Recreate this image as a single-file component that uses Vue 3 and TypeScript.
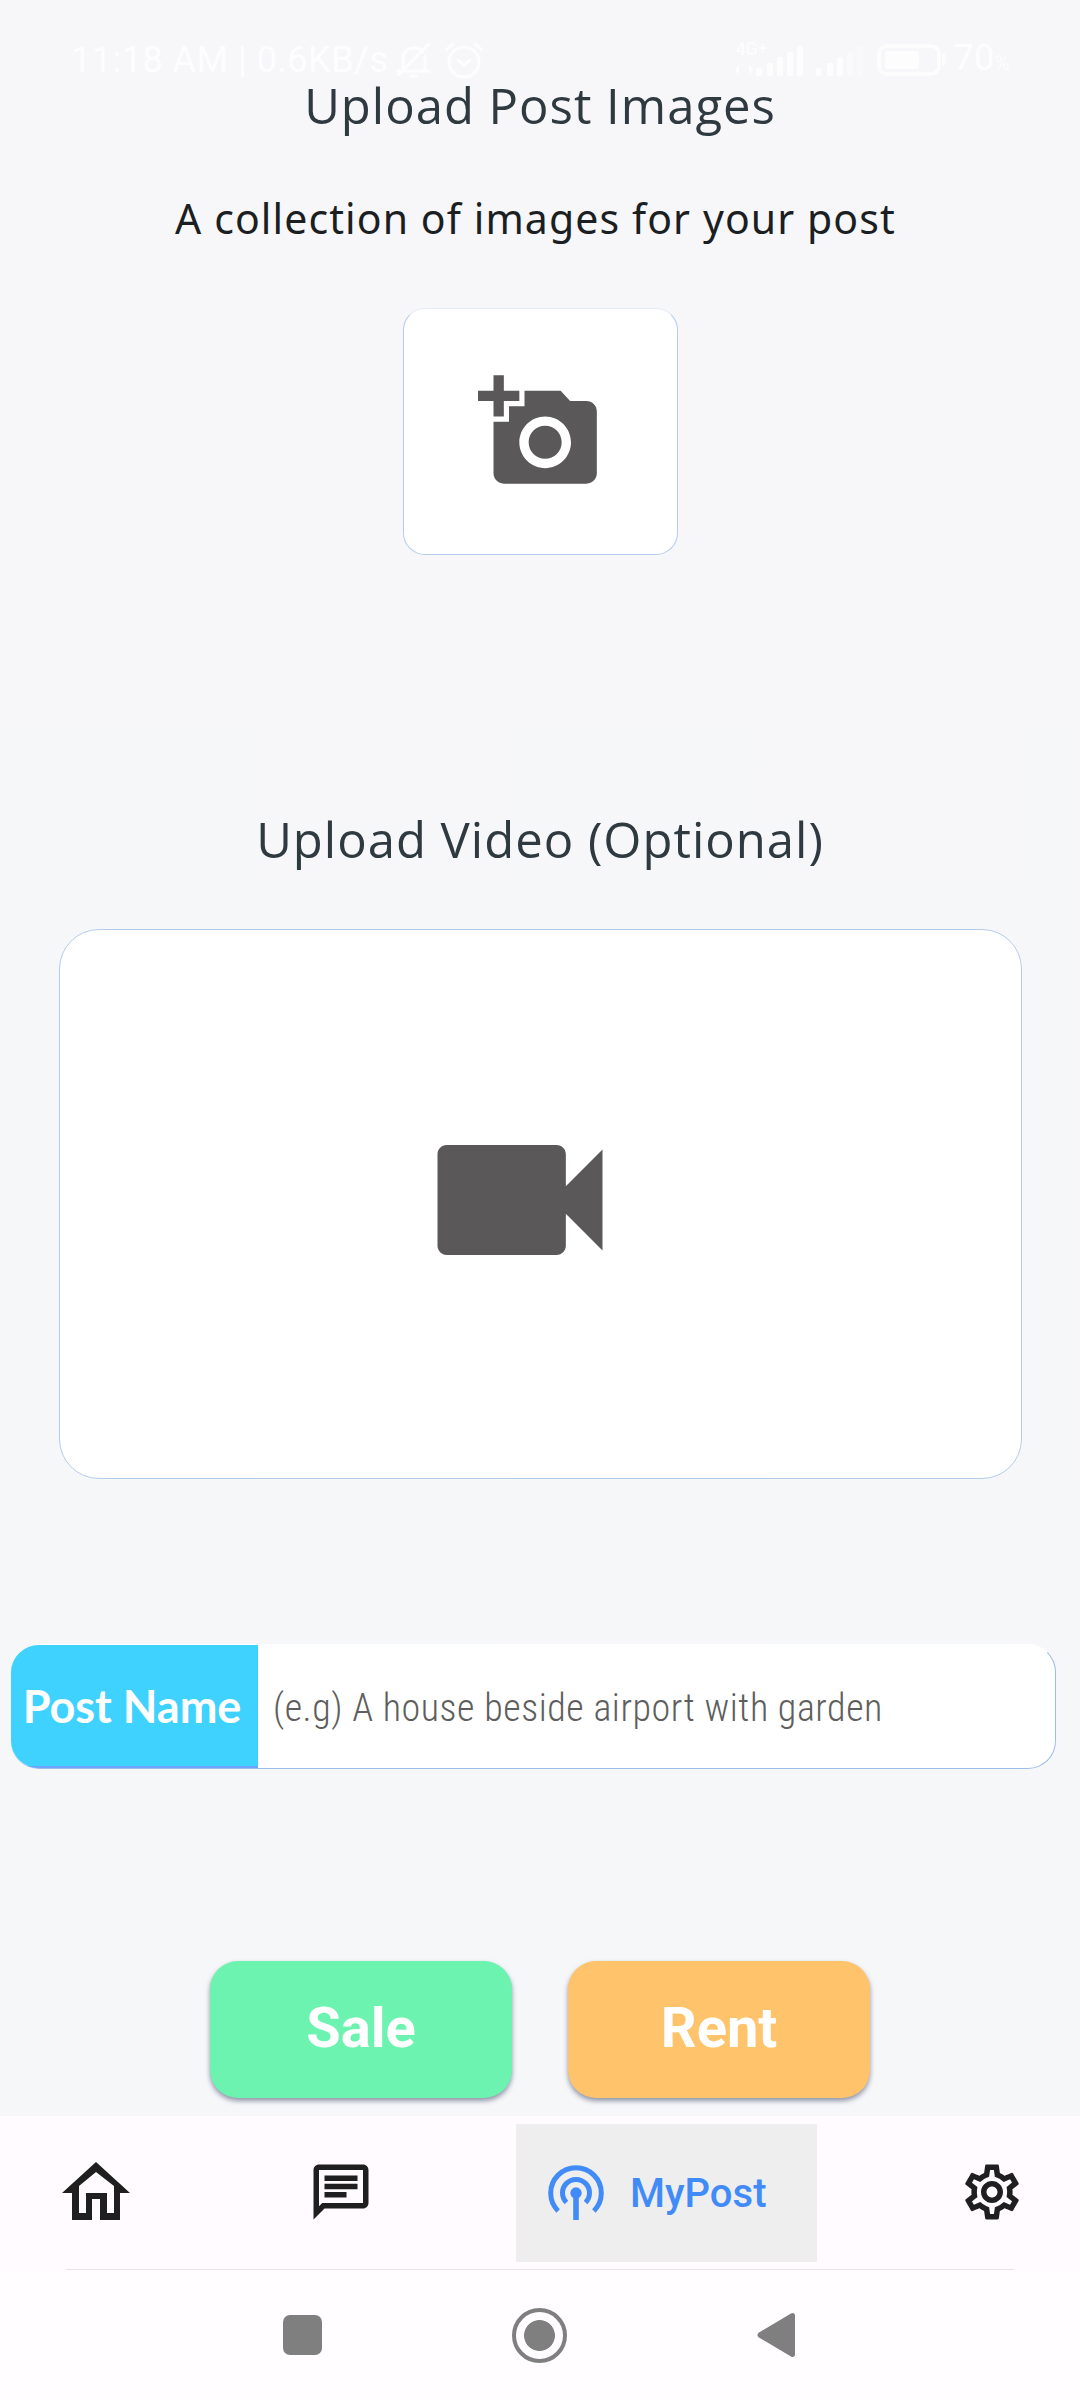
<script setup lang="ts">
const signalOne: number[][] = [[21, 26], [32, 21], [42, 15], [52, 10], [62, 4]]
const signalTwo: number[][] = [[81, 26, 1], [92, 21, 1], [102, 15, 1], [112, 10, 0.5], [122, 4, 0.4]]
</script>

<template>
  <div class="page">
    <div class="status">
      <div class="status-left">
        <span class="status-text">11:18 AM | 0.6KB/s</span>
        <svg class="bell" width="36" height="38" viewBox="0 0 36 38" fill="none" stroke="#fff" stroke-width="3">
          <path d="M2 30h31M7 30V19c0-7 4-12 11-12 4 0 7 1 9 4M29 15v15M2 34 33 3" stroke-linecap="round" />
          <path d="M14 34c1 2 6 2 7 0" />
        </svg>
        <svg class="alarm" width="40" height="38" viewBox="0 0 40 38" fill="none" stroke="#fff" stroke-width="3">
          <circle cx="20" cy="21" r="15" />
          <path d="M14 19l6 5 6-5M2 9l7-6M38 9l-7-6" stroke-linecap="round" />
        </svg>
      </div>
      <div class="status-right">
        <div class="signals">
          <span class="net">4G+</span>
          <svg width="130" height="36" viewBox="0 0 130 36">
            <path d="M4 22v11l-4-5zM14 33V22l4 5z" fill="#fff" />
            <rect v-for="b in signalOne" :key="b[0]" :x="b[0]" :y="b[1]" width="6" :height="34 - b[1]" rx="2" fill="#fff" />
            <rect v-for="b in signalTwo" :key="b[0]" :x="b[0]" :y="b[1]" width="6" :height="34 - b[1]" rx="2" fill="#fff" :opacity="b[2]" />
          </svg>
        </div>
        <svg class="battery" width="70" height="32" viewBox="0 0 70 32">
          <rect x="2" y="2" width="60" height="28" rx="8" fill="none" stroke="#fff" stroke-width="3.5" />
          <rect x="8" y="7" width="34" height="18" rx="2" fill="#fff" />
          <rect x="65" y="10" width="3.5" height="11" rx="1.5" fill="#fff" />
        </svg>
        <span class="status-text">70<small>%</small></span>
      </div>
    </div>

    <main class="content">
      <h2 class="title first">Upload Post Images</h2>
      <p class="subtitle">A collection of images for your post</p>

      <button class="upload image-upload" type="button" aria-label="Add images">
        <svg width="124" height="124" viewBox="0 0 24 24" fill="#5a5859">
          <path d="M3 4V1h2v3h3v2H5v3H3V6H0V4h3zm3 6V7h3V4h7l1.83 2H21c1.1 0 2 .9 2 2v12c0 1.1-.9 2-2 2H5c-1.1 0-2-.9-2-2V10h3zm7 9c2.76 0 5-2.24 5-5s-2.24-5-5-5-5 2.24-5 5 2.24 5 5 5zm-3.2-5c0 1.77 1.43 3.2 3.2 3.2s3.2-1.43 3.2-3.2-1.43-3.2-3.2-3.2-3.2 1.43-3.2 3.2z" />
        </svg>
      </button>

      <h2 class="title second">Upload Video (Optional)</h2>

      <button class="upload video-upload" type="button" aria-label="Add video">
        <svg width="220" height="220" viewBox="0 0 24 24" fill="#5a5859">
          <path d="M17 10.5V7c0-.55-.45-1-1-1H4c-.55 0-1 .45-1 1v10c0 .55.45 1 1 1h12c.55 0 1-.45 1-1v-3.5l4 4v-11l-4 4z" />
        </svg>
      </button>

      <div class="field">
        <label class="field-label">Post Name</label>
        <span class="field-placeholder">(e.g) A house beside airport with garden</span>
      </div>

      <div class="actions">
        <button class="action sale" type="button">Sale</button>
        <button class="action rent" type="button">Rent</button>
      </div>
    </main>

    <nav class="tabs">
      <svg class="tab-home" width="68" height="59" viewBox="62 2162 68 59" fill="#1f1f1f">
        <path fill-rule="evenodd" d="M96 2162 130 2193H120V2220H100V2199H92V2220H72V2193H62ZM96 2172 79 2186V2213H86V2193H107V2213H114V2186Z" />
      </svg>
      <svg class="tab-chat" width="66" height="66" viewBox="0 0 24 24" fill="#1f1f1f">
        <path d="M20 2H4c-1.1 0-1.99.9-1.99 2L2 22l4-4h14c1.1 0 2-.9 2-2V4c0-1.1-.9-2-2-2zm0 14H5.17L4 17.17V4h16v12zM6 12h8v2H6zm0-3h12v2H6zm0-3h12v2H6z" />
      </svg>
      <div class="tab-active">
        <svg width="58" height="58" viewBox="0 0 58 58" fill="none" stroke="#418bf8" stroke-width="5">
          <path d="M11.100 46.900A25.300 25.300 0 1 1 46.900 46.900" />
          <path d="M19.500 38.500A13.500 13.500 0 1 1 38.500 38.500" />
          <path d="M29 29V56" stroke-width="5.600" />
          <circle cx="29" cy="29" r="5.700" fill="#418bf8" stroke="none" />
        </svg>
        <span class="tab-label">MyPost</span>
      </div>
      <svg class="tab-gear" width="66" height="66" viewBox="0 0 24 24" fill="#1f1f1f">
        <path d="M19.43 12.98c.04-.32.07-.64.07-.98 0-.34-.03-.66-.07-.98l2.11-1.65c.19-.15.24-.42.12-.64l-2-3.46c-.09-.16-.26-.25-.44-.25-.06 0-.12.01-.17.03l-2.49 1c-.52-.4-1.08-.73-1.69-.98l-.38-2.65C14.46 2.18 14.25 2 14 2h-4c-.25 0-.46.18-.49.42l-.38 2.65c-.61.25-1.17.59-1.69.98l-2.49-1c-.06-.02-.12-.03-.18-.03-.17 0-.34.09-.43.25l-2 3.46c-.13.22-.07.49.12.64l2.11 1.65c-.04.32-.07.65-.07.98 0 .33.03.66.07.98l-2.11 1.65c-.19.15-.24.42-.12.64l2 3.46c.09.16.26.25.44.25.06 0 .12-.01.17-.03l2.49-1c.52.4 1.08.73 1.69.98l.38 2.65c.03.24.24.42.49.42h4c.25 0 .46-.18.49-.42l.38-2.65c.61-.25 1.17-.59 1.69-.98l2.49 1c.06.02.12.03.18.03.17 0 .34-.09.43-.25l2-3.46c.12-.22.07-.49-.12-.64l-2.11-1.65zm-1.98-1.71c.04.31.05.52.05.73 0 .21-.02.43-.05.73l-.14 1.13.89.7 1.08.84-.7 1.21-1.27-.51-1.04-.42-.9.68c-.43.32-.84.56-1.25.73l-1.06.43-.16 1.13-.2 1.35h-1.4l-.19-1.35-.16-1.13-1.06-.43c-.43-.18-.83-.41-1.23-.71l-.91-.7-1.06.43-1.27.51-.7-1.21 1.08-.84.89-.7-.14-1.13c-.03-.31-.05-.54-.05-.74s.02-.43.05-.73l.14-1.13-.89-.7-1.08-.84.7-1.21 1.27.51 1.04.42.9-.68c.43-.32.84-.56 1.25-.73l1.06-.43.16-1.13.2-1.35h1.39l.19 1.35.16 1.13 1.06.43c.43.18.83.41 1.23.71l.91.7 1.06-.43 1.27-.51.7 1.21-1.07.85-.89.7.14 1.13zM12 8c-2.21 0-4 1.79-4 4s1.79 4 4 4 4-1.79 4-4-1.79-4-4-4zm0 6c-1.1 0-2-.9-2-2s.9-2 2-2 2 .9 2 2-.9 2-2 2z" />
      </svg>
    </nav>

    <footer class="system-nav">
      <span class="sys-square"></span>
      <span class="sys-circle"></span>
      <svg class="sys-back" width="38" height="46" viewBox="0 0 38 46" fill="#7f7f7f">
        <path d="M34 1.500c2-1.300 4 0 4 2v39c0 2-2 3.300-4 2L2 25.500c-2-1.300-2-3.700 0-5z" />
      </svg>
    </footer>
  </div>
</template>

<style>
html, body { margin: 0; padding: 0; }
</style>

<style scoped>
.page {
  position: relative;
  width: 1080px;
  height: 2400px;
  overflow: hidden;
  background: linear-gradient(#f7f7fa, #f6f7f9);
  display: flex;
  flex-direction: column;
}

.status {
  position: absolute;
  top: 41px;
  left: 71px;
  right: 70px;
  height: 38px;
  display: flex;
  justify-content: space-between;
  align-items: center;
  color: #fff;
  opacity: 0.85;
}
.status-left, .status-right { display: flex; align-items: center; }
.status-text {
  font-family: Roboto, sans-serif;
  font-size: 36px;
  line-height: 38px;
  letter-spacing: 0.5px;
  white-space: nowrap;
}
.status-text small { font-size: 20px; }
.bell { margin-left: 7px; }
.alarm { margin-left: 12px; }
.signals { position: relative; width: 130px; height: 36px; }
.signals svg { display: block; }
.net {
  position: absolute;
  left: 0;
  top: -2px;
  font-family: Roboto, sans-serif;
  font-size: 18px;
  line-height: 18px;
  color: #fff;
}
.battery { margin-left: 12px; margin-right: 6px; }

.content {
  flex: 1;
  min-height: 0;
  display: flex;
  flex-direction: column;
  align-items: center;
}
.title {
  margin: 0;
  font-family: "Open Sans", sans-serif;
  font-weight: 400;
  font-size: 49px;
  line-height: 66px;
  letter-spacing: 1px;
  color: #2f3a40;
}
.title.first { margin-top: 72px; }
.title.second { margin-top: 251px; }
.subtitle {
  margin: 53px 9px 0 0;
  font-family: "Noto Sans", sans-serif;
  font-weight: 400;
  font-size: 41px;
  line-height: 54px;
  letter-spacing: 1.100px;
  color: #1c1f22;
}
.upload {
  box-sizing: border-box;
  padding: 0;
  background: #fff;
  border: 1px solid #b5cdea;
  display: flex;
  align-items: center;
  justify-content: center;
}
.image-upload {
  width: 275px;
  height: 247px;
  margin-top: 63px;
  border-radius: 22px;
  border-top-color: #e4ebf5;
}
.video-upload {
  width: 963px;
  height: 550px;
  margin-top: 57px;
  border-radius: 40px;
}
.video-upload svg { margin-right: 40px; margin-top: -8px; }

.field {
  box-sizing: border-box;
  align-self: flex-start;
  width: 1045px;
  height: 125px;
  margin: 165px 0 0 11px;
  display: flex;
  align-items: center;
  background: #fff;
  border: 1px solid #9dbcec;
  border-left: 0;
  border-top-color: #fff;
  border-radius: 28px;
  overflow: hidden;
}
.field-label {
  box-sizing: border-box;
  flex: none;
  width: 247px;
  height: 100%;
  padding-right: 5px;
  display: flex;
  align-items: center;
  justify-content: center;
  background: #3fd2ff;
  border-bottom: 2px solid #6ba3ff;
  color: #fff;
  font-family: Lato, sans-serif;
  font-weight: 700;
  font-size: 45px;
}
.field-placeholder {
  margin: 3px 0 0 15px;
  font-family: Roboto, sans-serif;
  font-weight: 300;
  font-size: 38px;
  font-stretch: 87%;
  letter-spacing: 0.55px;
  color: #5e5e5e;
  white-space: nowrap;
}

.actions {
  display: flex;
  gap: 56px;
  margin-top: 192px;
}
.action {
  width: 302px;
  height: 137px;
  padding: 0 0 3px;
  border: 0;
  border-radius: 28px;
  color: #fff;
  font-family: Roboto, sans-serif;
  font-weight: 700;
  font-size: 56px;
  box-shadow: 0 3px 5px rgba(60, 70, 100, 0.55);
}
.sale { background: #6df3b0; }
.rent { background: #ffc36b; }

.tabs {
  position: relative;
  box-sizing: border-box;
  flex: none;
  height: 154px;
  background: #fffbfe;
  display: flex;
  align-items: flex-start;
}
.tabs::after {
  content: "";
  position: absolute;
  left: 66px;
  right: 66px;
  bottom: 0;
  height: 1px;
  background: #e6e2e6;
}
.tab-home { margin: 46px 0 0 62px; }
.tab-chat { margin: 43px 0 0 178px; }
.tab-active {
  box-sizing: border-box;
  width: 301px;
  height: 138px;
  margin: 8px 0 0 142px;
  padding-left: 31px;
  display: flex;
  align-items: center;
  background: #eeeeee;
}
.tab-label {
  margin-left: 25px;
  font-family: Roboto, sans-serif;
  font-weight: 500;
  font-size: 40px;
  color: #418bf8;
}
.tab-gear { margin: 43px 0 0 142px; }

.system-nav {
  flex: none;
  height: 130px;
  background: #fffdff;
  display: flex;
  align-items: center;
  padding-left: 283px;
}
.sys-square {
  width: 39px;
  height: 40px;
  border-radius: 7px;
  background: #7f7f7f;
}
.sys-circle {
  box-sizing: border-box;
  width: 55px;
  height: 55px;
  margin-left: 190px;
  border: 4px solid #7f7f7f;
  border-radius: 50%;
  background: radial-gradient(circle, #7f7f7f 0 15px, #fffdff 15.800px);
}
.sys-back { margin-left: 190px; }
</style>
